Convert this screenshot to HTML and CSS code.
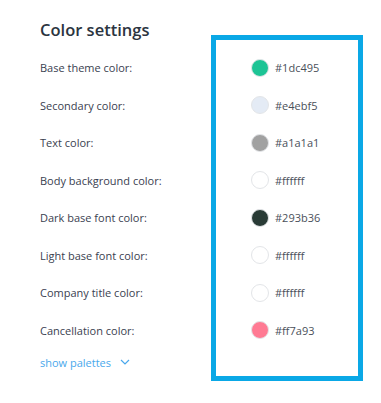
FILE: index.html
```html
<!DOCTYPE html>
<html>
<head>
<meta charset="utf-8">
<link rel="stylesheet" href="styles.css">
</head>
<body>
<div class="panel">
  <h2 class="title">Color settings</h2>
  <div class="rows">
    <div class="row"><span class="label">Base theme color:</span><span class="swatch" style="background:#1dc495"></span><span class="hex">#1dc495</span></div>
    <div class="row"><span class="label">Secondary color:</span><span class="swatch" style="background:#e4ebf5"></span><span class="hex">#e4ebf5</span></div>
    <div class="row"><span class="label">Text color:</span><span class="swatch" style="background:#a1a1a1"></span><span class="hex">#a1a1a1</span></div>
    <div class="row"><span class="label">Body background color:</span><span class="swatch" style="background:#ffffff"></span><span class="hex">#ffffff</span></div>
    <div class="row"><span class="label">Dark base font color:</span><span class="swatch" style="background:#293b36"></span><span class="hex">#293b36</span></div>
    <div class="row"><span class="label">Light base font color:</span><span class="swatch" style="background:#ffffff"></span><span class="hex">#ffffff</span></div>
    <div class="row"><span class="label">Company title color:</span><span class="swatch" style="background:#ffffff"></span><span class="hex">#ffffff</span></div>
    <div class="row"><span class="label">Cancellation color:</span><span class="swatch" style="background:#ff7a93"></span><span class="hex">#ff7a93</span></div>
  </div>
  <a class="toggle">show palettes <svg class="chev" width="10" height="6" viewBox="0 0 10 6"><path d="M1 1l4 4 4-4" fill="none" stroke="#4aa8ec" stroke-width="1.2"/></svg></a>
  <div class="highlight"></div>
</div>
</body>
</html>
```

FILE: styles.css
```css
html, body {
  margin: 0;
  padding: 0;
  background: #fff;
}
body {
  font-family: "Open Sans", "Noto Sans", sans-serif;
  width: 381px;
  height: 403px;
  overflow: hidden;
}
.panel {
  position: relative;
  padding: 18px 0 0 40px;
}
.title {
  margin: 0;
  font-size: 16.5px;
  font-weight: 600;
  color: #2b3440;
  line-height: 24px;
}
.rows {
  margin-top: 7px;
  display: flex;
  flex-direction: column;
}
.row {
  display: flex;
  align-items: center;
  height: 37.5px;
}
.label {
  width: 211px;
  font-size: 11px;
  color: #3a4150;
}
.swatch {
  width: 18px;
  height: 18px;
  border-radius: 50%;
  border: 1px solid #e3e5e8;
  box-sizing: border-box;
}
.hex {
  margin-left: 6px;
  font-size: 11px;
  color: #4a505a;
}
.toggle {
  display: flex;
  align-items: center;
  gap: 9px;
  margin-top: 6px;
  font-size: 11px;
  color: #4aa8ec;
}
.chev {
  margin-top: -2px;
}
.highlight {
  position: absolute;
  left: 211px;
  top: 35px;
  width: 152px;
  height: 346px;
  border: 5px solid #0aa8e6;
  box-sizing: border-box;
}
```
